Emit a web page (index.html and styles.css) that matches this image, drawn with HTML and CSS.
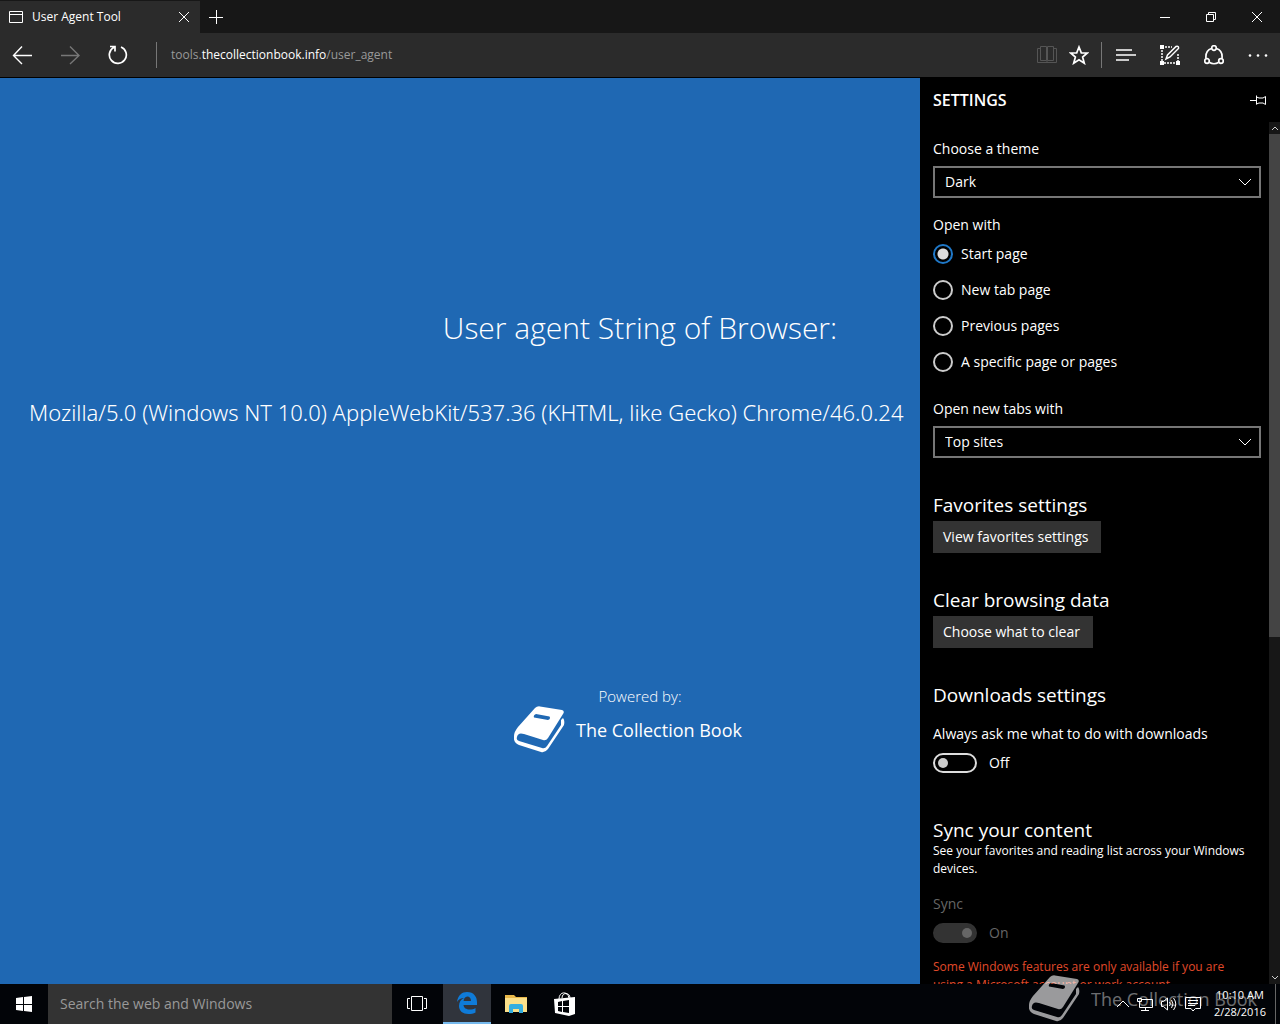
FILE: index.html
```html
<!DOCTYPE html>
<html lang="en">
<head>
<meta charset="utf-8">
<title>User Agent Tool</title>
<link rel="stylesheet" href="styles.css">
</head>
<body>
<svg class="defs" width="0" height="0" aria-hidden="true">
  <symbol id="book" viewBox="0 0 52 48">
    <path fill="currentColor" fill-rule="evenodd" d="M21 2Q23 0 26 .4L48 4Q51 5 49 8L34 32Q32 35 29 34L10 28Q4 26 3 31Q2 34 5 35L28 42Q31 43 33 40L47 19V14L49 12Q51 14 50 19L34 43Q31 47 27 46L5 39Q-1 37 0 30Q0 26 4 21ZM22 8Q19 9 20 11.500L34 14Q37 13 35.500 10.500Z"/>
  </symbol>
</svg>
<div class="desktop">
  <header class="tabs">
    <div class="tab">
      <svg width="16" height="14" viewBox="0 0 16 14" class="ico"><path d="M1.500 1.500h13v11h-13zM1.500 4.500h13"/></svg>
      <span class="tab-title">User Agent Tool</span>
      <button class="plain" aria-label="Close tab"><svg width="12" height="12" viewBox="0 0 12 12" class="ico"><path d="M1 1l10 10M11 1L1 11"/></svg></button>
    </div>
    <button class="plain new-tab" aria-label="New tab"><svg width="14" height="14" viewBox="0 0 14 14" class="ico"><path d="M7.500 0v14M0 7.500h14"/></svg></button>
    <div class="window-controls">
      <button class="plain" aria-label="Minimize"><svg width="10" height="10" viewBox="0 0 10 10" class="ico"><path d="M0 5.500h10"/></svg></button>
      <button class="plain" aria-label="Restore"><svg width="10" height="10" viewBox="0 0 10 10" class="ico"><path d="M.5 2.500h7v7h-7zM2.500 2.500v-2h7v7h-2"/></svg></button>
      <button class="plain" aria-label="Close"><svg width="10" height="10" viewBox="0 0 10 10" class="ico"><path d="M0 0l10 10M10 0L0 10"/></svg></button>
    </div>
  </header>
  <nav class="toolbar">
    <div class="nav-buttons">
      <button class="plain" aria-label="Back"><svg width="20" height="20" viewBox="0 0 20 20" class="ico bold"><path d="M10 1.500L1.500 10.500l8.500 8.500M1.500 10.500H20"/></svg></button>
      <button class="plain dim" aria-label="Forward"><svg width="20" height="20" viewBox="0 0 20 20" class="ico bold"><path d="M10 1.500l9 9-9 8.500M19 10.500H1"/></svg></button>
      <button class="plain" aria-label="Refresh"><svg width="20" height="20" viewBox="0 0 20 20" class="ico thick"><path d="M13 2a8.500 8.500 0 1 1-7 .3M2 1.500h5v5"/></svg></button>
    </div>
    <div class="address"><span>tools.</span><strong>thecollectionbook.info</strong><span>/user_agent</span></div>
    <div class="page-actions">
      <button class="plain faint" aria-label="Reading view"><svg width="20" height="20" viewBox="0 0 20 20" class="ico"><path d="M3.500 1.500h6v14h-6zM10.500 1.500h6v14h-6zM3 3.500H.5v14h19v-14H17M10 15v3"/></svg></button>
      <button class="plain" aria-label="Add to favorites"><svg width="20" height="20" viewBox="0 0 20 20" class="ico thick"><path d="M10 2l2.300 5.800 6 .2-4.700 4 1.700 6.200L10 14.700l-5.300 3.500L6.400 12 1.700 8l6-.2z"/></svg></button>
    </div>
    <div class="hub-actions">
      <button class="plain" aria-label="Hub"><svg width="20" height="20" viewBox="0 0 20 20" class="ico thick"><path d="M0 5h16M0 10h20M0 15h13"/></svg></button>
      <button class="plain" aria-label="Make a web note"><svg width="20" height="20" viewBox="0 0 20 20" class="ico"><path d="M2 5v11M4 18h12M18 9v7M5 2h7" stroke-width="1.500" stroke-dasharray="2 1"/><path class="fill" d="M0 0h4v4H0zM0 16h4v4H0zM16 16h4v4h-4z"/><path d="M6 14l1.500-4L16 1.500q3-1 2.500 2L10 12z" stroke-width="1.500"/></svg></button>
      <button class="plain" aria-label="Share"><svg width="20" height="20" viewBox="0 0 20 20" class="ico thick"><circle cx="10" cy="3" r="2.300"/><circle cx="3" cy="16" r="2.300"/><circle cx="17" cy="16" r="2.300"/><path d="M7.500 3.500C3 5 1.500 9 2 13.500M12.500 3.500C17 5 18.500 9 18 13.500M5.500 17.500q4.500 2.500 9 0"/></svg></button>
      <button class="plain" aria-label="More"><svg width="20" height="20" viewBox="0 0 20 20" class="fill"><circle cx="2" cy="10.500" r="1.300"/><circle cx="10" cy="10.500" r="1.300"/><circle cx="18" cy="10.500" r="1.300"/></svg></button>
    </div>
  </nav>
  <main class="content">
    <section class="page">
      <h1>User agent String of Browser:</h1>
      <p class="agent">Mozilla/5.0 (Windows NT 10.0) AppleWebKit/537.36 (KHTML, like Gecko) Chrome/46.0.24</p>
      <p class="powered">Powered by:</p>
      <a class="brand" href="#"><svg width="52" height="48"><use href="#book"/></svg><span>The Collection Book</span></a>
    </section>
    <aside class="settings">
      <div class="settings-head">
        <h2>SETTINGS</h2>
        <button class="plain" aria-label="Pin this pane"><svg width="16" height="10" viewBox="0 0 16 10" class="ico"><path d="M0 5.500h6M6.500 .5v9M6.500 2l2.500 1h4l2.500-1.500v8L13 8H9L6.500 9"/></svg></button>
      </div>
      <div class="settings-body">
        <form class="options">
          <label class="label" for="theme">Choose a theme</label>
          <div class="select"><select id="theme"><option>Dark</option><option>Light</option></select><svg width="12" height="8" viewBox="0 0 12 8" class="ico"><path d="M0 1l6 6 6-6"/></svg></div>
          <fieldset>
            <legend class="label">Open with</legend>
            <label class="radio"><input type="radio" name="open" checked>Start page</label>
            <label class="radio"><input type="radio" name="open">New tab page</label>
            <label class="radio"><input type="radio" name="open">Previous pages</label>
            <label class="radio"><input type="radio" name="open">A specific page or pages</label>
          </fieldset>
          <label class="label" for="tabs">Open new tabs with</label>
          <div class="select"><select id="tabs"><option>Top sites</option><option>A blank page</option></select><svg width="12" height="8" viewBox="0 0 12 8" class="ico"><path d="M0 1l6 6 6-6"/></svg></div>
          <h3>Favorites settings</h3>
          <button type="button" class="action">View favorites settings</button>
          <h3>Clear browsing data</h3>
          <button type="button" class="action">Choose what to clear</button>
          <h3>Downloads settings</h3>
          <label class="label spaced" for="ask">Always ask me what to do with downloads</label>
          <div class="toggle"><input type="checkbox" role="switch" id="ask"><span>Off</span></div>
          <h3 class="far">Sync your content</h3>
          <p class="note">See your favorites and reading list across your Windows devices.</p>
          <label class="label spaced off" for="sync">Sync</label>
          <div class="toggle off"><input type="checkbox" role="switch" id="sync" checked disabled><span>On</span></div>
          <p class="note warning">Some Windows features are only available if you are using a Microsoft account or work account.</p>
        </form>
        <div class="scrollbar" aria-hidden="true">
          <svg width="11" height="12" viewBox="0 0 11 12" class="ico"><path d="M3 8l3-3 3 3"/></svg>
          <div class="thumb"></div>
          <svg width="11" height="12" viewBox="0 0 11 12" class="ico"><path d="M3 4l3 3 3-3"/></svg>
        </div>
      </div>
    </aside>
  </main>
  <footer class="taskbar">
    <button class="plain task" aria-label="Start"><svg width="16" height="16" viewBox="0 0 16 16"><path class="fill" d="M0 2l7-1v7H0zM8 1l8-1v8H8zM0 9h7v6l-7-1zM8 9h8v7l-8-1z"/></svg></button>
    <input class="search" type="text" aria-label="Search" placeholder="Search the web and Windows">
    <button class="plain task" aria-label="Task view"><svg width="20" height="16" viewBox="0 0 20 16" class="ico"><path d="M4.500 .5h11v14h-11zM3 2.500H.5v10H3M17 2.500h2.500v10H17"/></svg></button>
    <button class="plain task running" aria-label="Microsoft Edge"><svg width="20" height="22" viewBox="0 0 20 22"><path fill="#0f7bd8" d="M0 10C1 3 5 0 10 0c7 0 10 5 10 10v3H6.500c.2 3 3 4.500 6 4.500 2.500 0 4.500-.7 6-1.600v4.500c-2 1.100-4.500 1.600-7 1.600C6 22 2 19 2 14c0-4 2-6.500 5-8C4 6 1.500 7.500 0 10zM6.600 9H14c0-3-1.500-4.500-3.700-4.500C8 4.500 6.800 6.700 6.600 9z"/></svg></button>
    <button class="plain task" aria-label="File Explorer"><svg width="22" height="20" viewBox="0 0 22 20"><path fill="#e8b84a" d="M0 1h9l2 2h11v15H0z"/><path fill="#fbe08a" d="M0 4h22v14H0z"/><path fill="#35aee0" d="M4 12q0-2 2-2h10q2 0 2 2v7h-4v-4H8v4H4z"/></svg></button>
    <button class="plain task" aria-label="Store"><svg width="22" height="24" viewBox="0 0 22 24"><path class="ico" d="M5 7c0-8 9-8 10-1M8 6c0-6 8-6 8 0"/><path fill="#fff" fill-rule="evenodd" d="M0 7l21-2v17l-6 2L1 21zM4 10v4h4V9zM9 9v5h6V8zM4 15v4l4 1v-5zM9 15v5l6 1v-6z"/></svg></button>
    <div class="tray">
      <button class="plain" aria-label="Show hidden icons"><svg width="12" height="8" viewBox="0 0 12 8" class="ico"><path d="M0 7l6-6 6 6"/></svg></button>
      <button class="plain" aria-label="Network"><svg width="16" height="16" viewBox="0 0 16 16" class="ico"><path d="M5 3.500h10.500v8h-13V8M.5 2.500h4v3h-4zM2.500 6v2M8.500 12v3M4 14.500h8"/></svg></button>
      <button class="plain" aria-label="Volume"><svg width="16" height="16" viewBox="0 0 16 16" class="ico"><path d="M.5 5.500h2L6.500 2v12l-4-3.500h-2zM8.500 6q1.500 2 0 4M10.500 4q3 4 0 8M12.500 2q4.500 6 0 12"/></svg></button>
      <button class="plain" aria-label="Notifications"><svg width="16" height="16" viewBox="0 0 16 16" class="ico"><path d="M.5 1.500h15v11h-5L8 15l-2-2.500H.5zM3 4.500h10M3 7.500h10M3 9.500h7"/></svg></button>
      <div class="clock"><time>10:10 AM</time><time>2/28/2016</time></div>
    </div>
  </footer>
  <div class="watermark"><svg width="52" height="48"><use href="#book"/></svg><span>The Collection Book</span></div>
</div>
</body>
</html>
```
FILE: styles.css
```css
* { box-sizing: border-box; }
body { margin: 0; font: 14px/20px "Open Sans", "Noto Sans", sans-serif; color: #fff; background: #000; }
h1, h2, h3, p, fieldset, legend { margin: 0; padding: 0; border: 0; font-weight: 400; }
button, input, select { font: inherit; color: inherit; margin: 0; }
.defs { position: absolute; }
.desktop { position: relative; display: grid; grid-template-rows: 33px 45px minmax(0, 1fr) 40px; height: 100vh; overflow: hidden; }
.plain { display: flex; align-items: center; justify-content: center; padding: 0; border: 0; background: none; }
.ico { fill: none; stroke: currentColor; stroke-width: 1; }
.bold { stroke-width: 1.4; }
.thick { stroke-width: 1.7; }
.fill { fill: currentColor; stroke: none; }

.tabs { display: flex; background: #171717; }
.tab { display: flex; align-items: center; width: 200px; padding: 0 10px 0 8px; margin-top: 1px; background: #2b2b2b; font-size: 12px; }
.tab-title { flex: 1; margin-left: 8px; }
.new-tab { width: 32px; }
.window-controls { display: flex; margin-left: auto; }
.window-controls .plain { width: 46px; }

.toolbar { display: flex; align-items: center; background: #2b2b2b; border-bottom: 1px solid #000; }
.nav-buttons { display: flex; gap: 28px; padding: 0 28px 0 12px; }
.address { flex: 1; border-left: 1px solid #777; padding: 3px 14px; font-size: 12px; color: #999; }
.address strong { color: #fff; font-weight: 400; }
.page-actions { display: flex; gap: 12px; padding-right: 12px; }
.hub-actions { display: flex; gap: 24px; padding: 3px 12px 3px 14px; border-left: 1px solid #777; }
.dim { color: #777; }
.faint { color: #555; }

.content { display: grid; grid-template-columns: minmax(0, 1fr) 360px; grid-template-rows: minmax(0, 1fr); }
.page { grid-area: 1 / 1 / 2 / 3; background: #1f68b3; overflow: hidden; display: flex; flex-direction: column; align-items: center; padding-top: 230px; }
.page h1 { font-size: 30px; line-height: 40px; font-weight: 300; }
.agent { align-self: flex-start; margin: 48px 0 0 29px; font-family: "Noto Sans", "Open Sans", sans-serif; font-size: 22px; line-height: 32px; font-weight: 300; white-space: nowrap; }
.powered { margin-top: 258px; font-size: 15px; font-weight: 300; }
.brand { display: flex; align-items: center; gap: 10px; color: #fff; text-decoration: none; font-size: 18px; margin-right: 24px; }

.settings { grid-area: 1 / 2 / 2 / 3; z-index: 1; background: #000; display: grid; grid-template-rows: 44px minmax(0, 1fr); }
.settings-head { display: flex; align-items: center; justify-content: space-between; padding: 0 14px 0 13px; }
.settings-head h2 { font-size: 16px; font-weight: 600; }
.settings-body { display: grid; grid-template-columns: minmax(0, 1fr) 11px; overflow: hidden; }
.options { padding: 17px 8px 0 13px; overflow: hidden; }
.label { display: block; }
.select { position: relative; margin: 7px 0 17px; }
.select select { appearance: none; width: 100%; height: 32px; padding: 0 10px; border: 2px solid #767676; border-radius: 0; background: #000; }
.select svg { position: absolute; right: 10px; top: 12px; pointer-events: none; }
.radio { display: flex; align-items: center; gap: 8px; margin-bottom: 16px; }
legend { padding-bottom: 9px; }
fieldset { margin-bottom: 27px; }
.radio:last-child { margin-bottom: 0; }
.radio input { appearance: none; width: 20px; height: 20px; border: 2px solid #ccc; border-radius: 50%; }
.radio input:checked { border-color: #1f78c8; background: radial-gradient(circle, #ddd 5px, #000 6px); }
h3 { margin-top: 35px; font-size: 19px; line-height: 24px; }
.action { display: block; height: 32px; margin-top: 4px; padding: 0 13px 0 10px; border: 0; background: #333; }
.spaced { margin-top: 17px; }
.toggle { display: flex; align-items: center; gap: 12px; margin-top: 9px; }
.toggle input { appearance: none; display: flex; align-items: center; width: 44px; height: 20px; padding: 0 3px; border: 2px solid #ddd; border-radius: 10px; }
.toggle input::before { content: ""; width: 10px; height: 10px; border-radius: 50%; background: #ccc; }
.toggle input:checked { justify-content: flex-end; border-color: #333; background: #333; }
.toggle input:checked::before { background: #666; }
.off { color: #666; }
.spaced.off { margin-top: 16px; }
h3.far { margin-top: 45px; }
.note { font-size: 12px; line-height: 18px; }
.warning { margin-top: 15px; padding-right: 24px; color: #e04a2a; }
.scrollbar { display: grid; grid-template-rows: 12px minmax(0, 1fr) 12px; background: #171717; color: #ccc; }
.thumb { height: 60%; background: #444; }

.taskbar { display: flex; background: #020408; }
.task { width: 49px; }
.task:first-child { width: 48px; }
.search { width: 344px; padding: 0 12px; border: 0; border-radius: 0; background: #333; }
.search::placeholder { color: #999; opacity: 1; }
.task.running { width: 48px; margin-left: 2px; background: #30343c; border-bottom: 2px solid #76b9ed; }
.tray { display: flex; align-items: center; margin: 0 4px 0 auto; padding-right: 9px; border-right: 1px solid #666; gap: 8px; }
.clock { display: grid; margin-left: 5px; padding-bottom: 2px; font-size: 11px; line-height: 17px; text-align: center; }
.watermark { position: absolute; z-index: 2; right: 23px; bottom: 1px; display: flex; align-items: center; gap: 10px; color: #fff; font-size: 18px; opacity: .6; pointer-events: none; }
.watermark span { opacity: .7; }
```
